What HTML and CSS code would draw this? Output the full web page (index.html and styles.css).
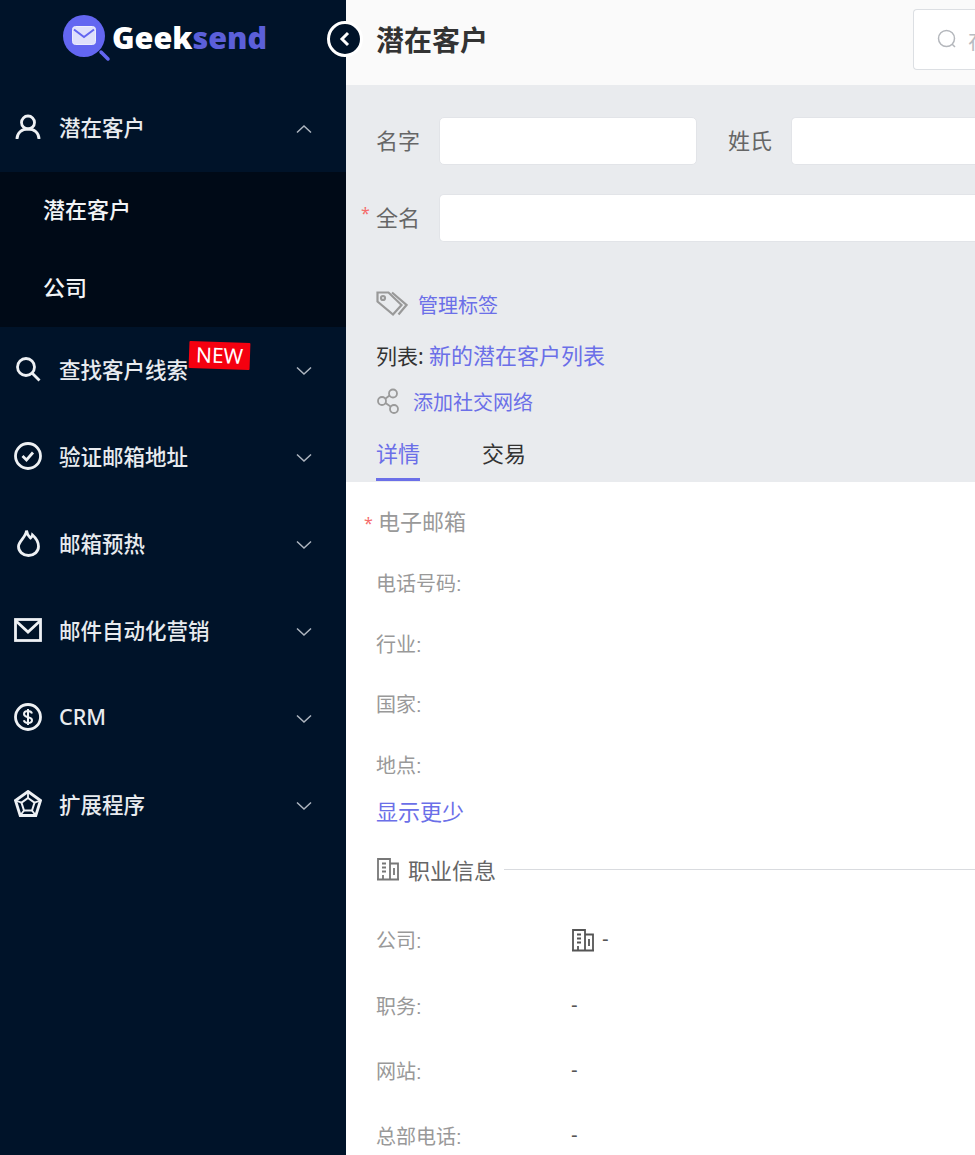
FILE: index.html
```html
<!DOCTYPE html>
<html lang="zh-CN">
<head>
    <meta charset="UTF-8">
    <title>潜在客户</title>
    <link rel="stylesheet" href="styles.css">
</head>
<body>
    <aside class="sidebar">
        <div class="logo">
            <svg class="logo-icon" width="50" height="50" viewBox="0 0 50 50">
                <circle cx="21" cy="21" r="21" fill="#6366f1"/>
                <rect x="9.500" y="11.500" width="23" height="18" rx="3" fill="#dfe0fb" stroke="#eceDfd"/>
                <path d="M11 14.500l10 7.500 10-7.500" fill="none" stroke="#6366f1" stroke-width="2"/>
                <path d="M38 37l7 7" stroke="#6366f1" stroke-width="3.500" stroke-linecap="round"/>
            </svg>
            <span class="logo-text">Geek<span class="logo-accent">send</span></span>
        </div>

        <div class="menu-item open">
            <svg class="menu-icon" viewBox="0 0 28 28"><circle cx="14" cy="9.500" r="6.500"/><path d="M3 26c0-6 4.500-10 11-10s11 4 11 10"/></svg>
            <span class="menu-label">潜在客户</span>
            <svg class="chevron" viewBox="0 0 16 10"><path d="M1 8.500l7-6.500 7 6.500"/></svg>
        </div>
        <div class="submenu">
            <div class="submenu-item">潜在客户</div>
            <div class="submenu-item">公司</div>
        </div>

        <div class="menu-item">
            <svg class="menu-icon" viewBox="0 0 28 28"><circle cx="12" cy="12" r="8.500"/><path d="M18 18l7.500 7.500"/></svg>
            <span class="menu-label">查找客户线索<span class="badge">NEW</span></span>
            <svg class="chevron" viewBox="0 0 16 10"><path d="M1 1.500l7 6.500 7-6.500"/></svg>
        </div>
        <div class="menu-item">
            <svg class="menu-icon" viewBox="0 0 28 28"><circle cx="14" cy="14" r="12.500"/><path d="M8.500 14l4 4 6.500-7.500"/></svg>
            <span class="menu-label">验证邮箱地址</span>
            <svg class="chevron" viewBox="0 0 16 10"><path d="M1 1.500l7 6.500 7-6.500"/></svg>
        </div>
        <div class="menu-item">
            <svg class="menu-icon" viewBox="0 0 28 28"><path d="M12.500 1.500c.5 4.500 2.500 6 4 7.500 1.200-.8 1.800-1.800 2-3C22.500 9.500 24.500 13 24.500 17.500c0 5-4.300 9-10 9s-10-4-10-9c0-5.500 7.500-9 8-16z"/></svg>
            <span class="menu-label">邮箱预热</span>
            <svg class="chevron" viewBox="0 0 16 10"><path d="M1 1.500l7 6.500 7-6.500"/></svg>
        </div>
        <div class="menu-item">
            <svg class="menu-icon" viewBox="0 0 28 28"><rect x="1.500" y="3.500" width="25" height="21"/><path d="M2 5l12 11L26 5"/></svg>
            <span class="menu-label">邮件自动化营销</span>
            <svg class="chevron" viewBox="0 0 16 10"><path d="M1 1.500l7 6.500 7-6.500"/></svg>
        </div>
        <div class="menu-item">
            <svg class="menu-icon" viewBox="0 0 28 28"><circle cx="14" cy="14" r="12.500"/><path d="M18 10.500c-.5-1.500-2-2.500-4-2.500-2.500 0-4 1.200-4 3 0 4.500 8 2 8 6.200 0 1.800-1.700 2.800-4 2.800-2.200 0-3.800-1-4.200-2.700M14 6v16" stroke-width="2"/></svg>
            <span class="menu-label">CRM</span>
            <svg class="chevron" viewBox="0 0 16 10"><path d="M1 1.500l7 6.500 7-6.500"/></svg>
        </div>
        <div class="menu-item">
            <svg class="menu-icon" viewBox="0 0 28 28"><path d="M14 1.500l12.500 9-4.700 15H6.200l-4.700-15z"/><path d="M14 8l6.500 4.700-2.500 7.800h-8l-2.500-7.800z" stroke-width="2"/><path d="M14 1.500V8M26.500 10.500l-6 2.200M21.800 25.500L18 20.500M6.200 25.500l3.800-5M1.500 10.500l6 2.200" stroke-width="1.800"/></svg>
            <span class="menu-label">扩展程序</span>
            <svg class="chevron" viewBox="0 0 16 10"><path d="M1 1.500l7 6.500 7-6.500"/></svg>
        </div>
    </aside>

    <button class="collapse-btn">
        <svg width="14" height="18" viewBox="0 0 14 18"><path d="M10 3L4 9l6 6"/></svg>
    </button>

    <main class="main">
        <header class="topbar">
            <h1 class="page-title">潜在客户</h1>
            <div class="search-box">
                <svg width="22" height="22" viewBox="0 0 22 22"><circle cx="10.500" cy="10.500" r="8"/><path d="M16 16l3 3"/></svg>
                <span class="search-hint">在</span>
            </div>
        </header>

        <section class="lead-head">
            <div class="form-row">
                <label class="field-label">名字</label>
                <div class="text-input first-name"></div>
                <label class="field-label last-label">姓氏</label>
                <div class="text-input grow"></div>
            </div>
            <div class="form-row">
                <label class="field-label"><span class="required">*</span>全名</label>
                <div class="text-input grow"></div>
            </div>

            <div class="tag-row">
                <svg class="tag-icon" width="32" height="26" viewBox="0 0 32 26"><path d="M1.500 1.500h11l13 12.500-8.500 9.500-15.500-13z"/><path d="M16 1.500l14.500 12.500-8 9.500"/><circle cx="7" cy="7" r="2"/></svg>
                <a class="link">管理标签</a>
            </div>
            <div class="list-row">列表: <a class="link list-link">新的潜在客户列表</a></div>
            <div class="social-row">
                <svg width="24" height="26" viewBox="0 0 24 26"><circle cx="17" cy="5.500" r="4"/><circle cx="6" cy="13" r="4"/><circle cx="18" cy="21" r="4"/><path d="M13.500 7.500l-4.200 3.200M9.500 15l5 3.500"/></svg>
                <a class="link">添加社交网络</a>
            </div>
            <div class="tabs">
                <div class="tab active">详情</div>
                <div class="tab">交易</div>
            </div>
        </section>

        <section class="details">
            <div class="detail-email"><span class="required">*</span>电子邮箱</div>
            <div class="detail-line">电话号码:</div>
            <div class="detail-line">行业:</div>
            <div class="detail-line">国家:</div>
            <div class="detail-line">地点:</div>
            <a class="link show-less">显示更少</a>

            <div class="section-title">
                <svg class="building" width="24" height="24" viewBox="0 0 24 24"><path d="M2 22.500V2h12v20.500M14 6.500h8v16M1 22.500h22M6 6.500h4M6 10.500h4M6 14.500h4M7 22v-4M18 11v7"/></svg>
                <span>职业信息</span>
                <div class="section-rule"></div>
            </div>

            <div class="info-row">
                <span class="info-key">公司:</span>
                <span class="info-value">
                    <svg class="building" width="24" height="24" viewBox="0 0 24 24"><path d="M2 22.500V2h12v20.500M14 6.500h8v16M1 22.500h22M6 6.500h4M6 10.500h4M6 14.500h4M7 22v-4M18 11v7"/></svg>
                    -
                </span>
            </div>
            <div class="info-row"><span class="info-key">职务:</span><span class="info-value">-</span></div>
            <div class="info-row"><span class="info-key">网站:</span><span class="info-value">-</span></div>
            <div class="info-row"><span class="info-key">总部电话:</span><span class="info-value">-</span></div>
        </section>
    </main>
</body>
</html>
```

FILE: styles.css
```css
html, body {
    height: 100%;
}
body {
    margin: 0;
    display: flex;
    height: 1155px;
    overflow: hidden;
    position: relative;
    font-family: "Noto Sans", "Noto Sans CJK SC", sans-serif;
    font-size: 22px;
    color: #333;
    background: #fff;
}
a {
    text-decoration: none;
}
.sidebar {
    width: 346px;
    flex-shrink: 0;
    background: #001329;
    color: #e8ebef;
}
.logo {
    height: 85px;
    padding: 15px 0 0 63px;
    box-sizing: border-box;
    display: flex;
    align-items: flex-start;
}
.logo-text {
    margin-left: -1px;
    font-family: "Open Sans", sans-serif;
    font-weight: 800;
    font-size: 30.500px;
    line-height: 44px;
    color: #fff;
}
.logo-accent {
    color: #5b5fd9;
}
.menu-item {
    height: 87px;
    padding: 0 34px 0 14px;
    display: flex;
    align-items: center;
}
.menu-icon {
    width: 28px;
    height: 28px;
    margin-right: 17px;
    margin-top: -3px;
    fill: none;
    stroke: #eef1f4;
    stroke-width: 2.800;
    flex-shrink: 0;
}
.menu-label {
    flex: 1;
    position: relative;
    padding-bottom: 4px;
    font-size: 21.500px;
    font-weight: 500;
}
.chevron {
    width: 16px;
    height: 10px;
    fill: none;
    stroke: #aeb6c0;
    stroke-width: 1.500;
}
.badge {
    position: absolute;
    left: 130px;
    top: -11px;
    padding: 0 7px;
    height: 27px;
    line-height: 27px;
    background: #f5000f;
    color: #fff;
    font-size: 21px;
    font-weight: 400;
    border-radius: 1px;
    transform: rotate(2deg);
}
.submenu {
    background: #000a17;
}
.submenu-item {
    height: 77.500px;
    line-height: 75.500px;
    padding-left: 43px;
    color: #f2f4f6;
    font-weight: 500;
}
.collapse-btn {
    position: absolute;
    left: 327px;
    top: 21px;
    width: 36px;
    height: 36px;
    padding: 0;
    border: 3px solid #fff;
    border-radius: 50%;
    background: #001329;
    display: flex;
    align-items: center;
    justify-content: center;
}
.collapse-btn svg {
    fill: none;
    stroke: #fff;
    stroke-width: 3;
}
.main {
    flex: 1;
    min-width: 0;
    overflow: hidden;
}
.topbar {
    height: 85px;
    background: #fafafa;
    padding: 0 0 0 30px;
    box-sizing: border-box;
    display: flex;
    align-items: center;
    justify-content: space-between;
}
.page-title {
    margin: -7px 0 0;
    font-size: 28px;
    font-weight: 700;
    color: #333;
}
.search-box {
    width: 62px;
    height: 61px;
    margin-top: -7px;
    box-sizing: border-box;
    border: 1px solid #dcdfe3;
    border-right: none;
    border-radius: 4px 0 0 4px;
    background: #fff;
    padding-left: 22px;
    display: flex;
    align-items: center;
    gap: 10px;
    overflow: hidden;
    color: #b9bcc2;
}
.search-box svg {
    flex-shrink: 0;
    fill: none;
    stroke: #b4b7bc;
    stroke-width: 1.500;
}
.search-hint {
    flex-shrink: 0;
}
.lead-head {
    height: 397px;
    background: #e9ebee;
    padding: 32px 0 0 30px;
    box-sizing: border-box;
    color: #333;
}
.form-row {
    height: 48px;
    margin-bottom: 29px;
    display: flex;
    align-items: center;
}
.field-label {
    width: 63px;
    flex-shrink: 0;
    color: #666;
    position: relative;
    padding-bottom: 4px;
}
.last-label {
    width: 63px;
    margin-left: 31px;
}
.text-input {
    height: 48px;
    box-sizing: border-box;
    background: #fff;
    border: 1px solid #e2e4e8;
    border-radius: 5px;
}
.first-name {
    width: 258px;
    flex-shrink: 0;
}
.grow {
    flex: 1;
    border-right: none;
    border-radius: 5px 0 0 5px;
}
.required {
    position: absolute;
    left: -15px;
    top: 1px;
    color: #f56c6c;
    font-size: 16px;
    line-height: 24px;
}
.tag-row {
    margin-top: 46px;
    height: 32px;
    display: flex;
    align-items: center;
    gap: 10px;
    font-size: 20px;
}
.tag-icon, .social-row svg, .building {
    fill: none;
    stroke: #999;
    stroke-width: 1.800;
    flex-shrink: 0;
}
.tag-icon {
    stroke-width: 2.200;
}
.link {
    color: #6b6fe8;
}
.list-row {
    margin-top: 18px;
    height: 34px;
    line-height: 34px;
    font-size: 21px;
}
.list-link {
    font-size: 22px;
}
.social-row {
    margin-top: 12px;
    height: 34px;
    display: flex;
    align-items: center;
    gap: 13px;
    font-size: 20px;
}
.social-row svg {
    stroke: #9a9a9a;
}
.tabs {
    margin-top: 16px;
    display: flex;
    gap: 62px;
}
.tab {
    height: 47px;
    line-height: 38px;
    box-sizing: border-box;
}
.tab.active {
    color: #6b6fe8;
    border-bottom: 3px solid #6b6fe8;
}
.details {
    padding: 0 0 0 30px;
    position: relative;
    color: #999;
}
.detail-email {
    height: 60px;
    line-height: 78px;
    position: relative;
    padding-left: 2px;
}
.detail-email .required {
    left: -12px;
    top: 29px;
}
.detail-line {
    height: 60.500px;
    line-height: 84px;
    font-family: "Liberation Sans", "Noto Sans CJK SC", sans-serif;
    font-size: 20px;
}
.show-less {
    display: block;
    height: 34px;
    line-height: 34px;
    margin-top: 10px;
}
.section-title {
    margin-top: 24px;
    height: 34px;
    display: flex;
    align-items: center;
    color: #666;
}
.section-title .building {
    margin-right: 8px;
    stroke: #777;
}
.section-rule {
    flex: 1;
    height: 1px;
    margin-left: 8px;
    background: #d9dbdf;
}
.info-row {
    height: 65.400px;
    display: flex;
    align-items: center;
    font-family: "Liberation Sans", "Noto Sans CJK SC", sans-serif;
    font-size: 20px;
}
.section-title + .info-row {
    margin-top: 21px;
}
.info-key {
    width: 195px;
    flex-shrink: 0;
}
.info-value {
    display: flex;
    align-items: center;
    gap: 7px;
    color: #555;
}
.info-value .building {
    stroke: #555;
}
```
